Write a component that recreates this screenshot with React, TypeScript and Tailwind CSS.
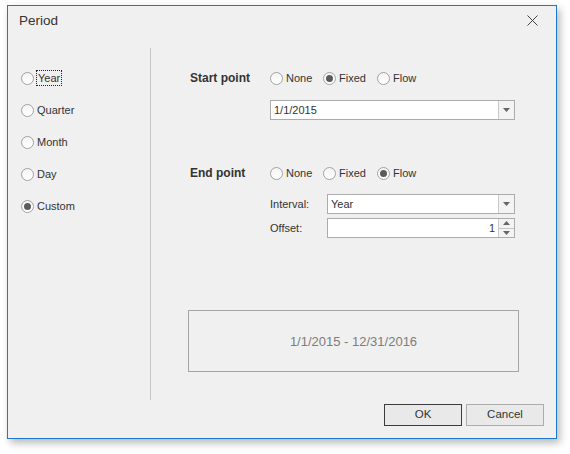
import React from "react";

const Radio = ({ label, checked = false, focused = false, width }: { label: string; checked?: boolean; focused?: boolean; width?: string }) => {
  return (
    <div className={`flex items-center h-[16px] ${width ?? ""}`}>
      <span className="w-[13px] h-[13px] rounded-full border border-[#a3a3a3] bg-gradient-to-b from-[#f4f4f4] to-white flex items-center justify-center shrink-0">
        {checked && <span className="w-[7px] h-[7px] rounded-full bg-[#5b5b5b]" />}
      </span>
      <span className={`ml-[3px] leading-[14px] ${focused ? "outline outline-1 outline-dotted outline-[#222] px-[1px]" : ""}`}>{label}</span>
    </div>
  );
};

const DropArrow = () => (
  <svg width="7" height="4" viewBox="0 0 7 4">
    <path d="M0 0h7L3.5 4z" fill="#666" />
  </svg>
);

const Combo = ({ value, width }: { value: string; width: string }) => {
  return (
    <div className={`flex h-[20px] border border-[#acacac] bg-white ${width}`}>
      <div className="flex-1 flex items-center pl-[3px]">{value}</div>
      <div className="w-[16px] border-l border-[#c8c8c8] bg-[#f3f3f3] flex items-center justify-center">
        <DropArrow />
      </div>
    </div>
  );
};

const Spin = ({ value, width }: { value: string; width: string }) => {
  return (
    <div className={`flex h-[20px] border border-[#acacac] bg-white ${width}`}>
      <div className="flex-1 flex items-center justify-end pr-[3px]">{value}</div>
      <div className="w-[16px] border-l border-[#c8c8c8] bg-[#f3f3f3] flex flex-col">
        <div className="flex-1 flex items-center justify-center border-b border-[#c8c8c8]">
          <svg width="7" height="4" viewBox="0 0 7 4">
            <path d="M0 4h7L3.5 0z" fill="#666" />
          </svg>
        </div>
        <div className="flex-1 flex items-center justify-center">
          <DropArrow />
        </div>
      </div>
    </div>
  );
};

export default function App() {
  return (
    <div className="w-[570px] h-[454px] bg-white pt-[5px] pl-[7px] font-['Liberation_Sans',Arial,sans-serif] text-[11px] text-[#333]">
      <div className="w-[550px] h-[434px] border border-[#1d79cf] bg-[#f0f0f0] shadow-[3px_4px_8px_rgba(0,0,0,0.28)] flex flex-col">
        {/* title */}
        <div className="h-[29px] flex items-center justify-between pl-[11px] pr-[18px]">
          <span className="text-[13.5px] text-[#333] mt-[1px]">Period</span>
          <svg width="11" height="11" viewBox="0 0 11 11">
            <path d="M0.5 0.5L10.5 10.5M10.5 0.5L0.5 10.5" stroke="#444" strokeWidth="1" />
          </svg>
        </div>

        <div className="mt-[13px] h-[352px] flex">
          {/* left */}
          <div className="w-[142px] pl-[13px] pt-[22px] flex flex-col gap-[16px]">
            <Radio label="Year" focused />
            <Radio label="Quarter" />
            <Radio label="Month" />
            <Radio label="Day" />
            <Radio label="Custom" checked />
          </div>
          <div className="w-px bg-[#c6c6c6]" />

          {/* right */}
          <div className="flex-1 pl-[39px] flex flex-col">
            <div className="mt-[22px] flex items-center h-[16px]">
              <span className="w-[80px] font-bold text-[12px]">Start point</span>
              <Radio label="None" width="w-[53px]" />
              <Radio label="Fixed" checked width="w-[54px]" />
              <Radio label="Flow" />
            </div>
            <div className="mt-[14px] ml-[80px]">
              <Combo value="1/1/2015" width="w-[245px]" />
            </div>

            <div className="mt-[45px] flex items-center h-[16px]">
              <span className="w-[80px] font-bold text-[12px]">End point</span>
              <Radio label="None" width="w-[53px]" />
              <Radio label="Fixed" width="w-[54px]" />
              <Radio label="Flow" checked />
            </div>
            <div className="mt-[13px] ml-[80px] flex items-center">
              <span className="w-[57px]">Interval:</span>
              <Combo value="Year" width="w-[188px]" />
            </div>
            <div className="mt-[4px] ml-[80px] flex items-center">
              <span className="w-[57px]">Offset:</span>
              <Spin value="1" width="w-[188px]" />
            </div>

            <div className="mt-[72px] -ml-[2px] w-[331px] h-[62px] border border-[#a5a5a5] flex items-center justify-center text-[13px] text-[#7d7d7d] pt-[1px]">
              1/1/2015 - 12/31/2016
            </div>
          </div>
        </div>

        {/* footer */}
        <div className="flex justify-end gap-[4px] pr-[12px] pt-[4px]">
          <button className="w-[78px] h-[22px] border border-[#3c3c3c] bg-[#e9e9e9] text-[11.5px] text-[#333]">OK</button>
          <button className="w-[78px] h-[22px] border border-[#adadad] bg-[#e9e9e9] text-[11.5px] text-[#333]">Cancel</button>
        </div>
      </div>
    </div>
  );
}
